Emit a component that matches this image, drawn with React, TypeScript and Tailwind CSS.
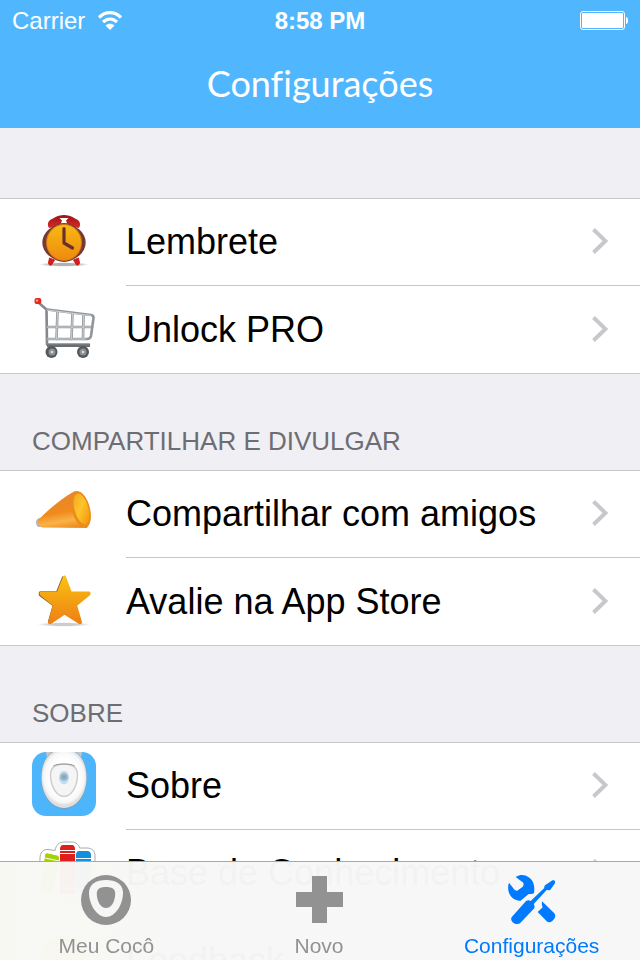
import type { ReactNode } from "react";

function ClockIcon() {
  return (
    <svg viewBox="0 -2 64 64" className="size-16" aria-hidden="true">
      <defs>
        <linearGradient id="clockFace" x1="0" y1="0" x2="0" y2="1">
          <stop offset="0" stopColor="#f8b912" />
          <stop offset="1" stopColor="#ee8a10" />
        </linearGradient>
        <linearGradient id="clockBell" x1="0" y1="0" x2="0" y2="1">
          <stop offset="0" stopColor="#981518" />
          <stop offset="1" stopColor="#dc2a22" />
        </linearGradient>
        <radialGradient id="clockShadow">
          <stop offset="0.5" stopColor="#b0b0b0" />
          <stop offset="1" stopColor="#b0b0b0" stopOpacity="0" />
        </radialGradient>
      </defs>
      <ellipse cx="32" cy="54.500" rx="25" ry="2.200" fill="url(#clockShadow)" />
      <path d="M17.500 48l-1 5 1 2h2l3-5zM46.500 48l1 5-1 2h-2l-3-5z" fill="#cf1f1f" stroke="#cf1f1f" />
      <path d="M17 18c-2.500-4-.5-8 4-9.500C25 5.500 29 5 32 5s7 .5 11 3.500c4.500 1.500 6.500 5.500 4 9.500l-5-1-5-3H27l-5 3z" fill="url(#clockBell)" />
      <path d="M27.500 8h9l-2.500 2.500 1.500 4h-7l1.500-4z" fill="#fff" />
      <ellipse cx="32" cy="32.500" rx="21.700" ry="18.500" fill="#743b35" />
      <ellipse cx="32" cy="32.500" rx="18.500" ry="19.500" fill="#743b35" />
      <ellipse cx="32" cy="32.500" rx="18" ry="18.500" fill="#d97716" />
      <ellipse cx="32" cy="32.500" rx="17" ry="17.500" fill="url(#clockFace)" />
      <path d="M32 18.500V33l8.500 5" fill="none" stroke="#693128" strokeWidth="3.200" strokeLinecap="round" strokeLinejoin="round" />
    </svg>
  );
}

function CartIcon() {
  return (
    <svg viewBox="0 -3 64 64" className="size-16" aria-hidden="true">
      <g fill="none" stroke="#92969a" strokeWidth="2.600" strokeLinejoin="round" strokeLinecap="round">
        <path d="M7 5l7.500 6.500L15 46.500h42" stroke="#84888c" />
        <path d="M15 11.500l44 5.500c2 .3 2.700 1.500 2.500 3L59 38c-.5 2-1.500 3-4 3H15" />
        <path d="M15 29H60" />
        <path d="M25.500 13l-1 28M40.500 15l-1 26M51.500 17L51 41" />
      </g>
      <g fill="none" stroke="#d3d6d9" strokeWidth=".9">
        <path d="M15 12l44 5.500M15 29h44M15.500 41H54M25.500 13l-1 28M40.500 15l-1 26M51.500 17L51 41" />
      </g>
      <path d="M15 46.500h43v2.500H15z" fill="#6b6e72" />
      <g>
        <circle cx="19.500" cy="54" r="6" fill="#53585b" />
        <circle cx="51" cy="54" r="6" fill="#53585b" />
        <circle cx="20" cy="54" r="3.500" fill="#8b9194" />
        <circle cx="51" cy="54" r="3.500" fill="#8b9194" />
        <circle cx="20" cy="54" r="1.300" fill="#d9dcde" />
        <circle cx="51" cy="54" r="1.300" fill="#d9dcde" />
      </g>
      <rect x="2.500" y="0" width="6.800" height="6" rx="2" fill="#e3291d" />
      <circle cx="5" cy="2.500" r="1.200" fill="#ff9d8c" />
    </svg>
  );
}

function MegaphoneIcon() {
  return (
    <svg viewBox="0 -2 64 64" className="size-16" aria-hidden="true">
      <defs>
        <linearGradient id="coneBody" x1="0.400" y1="0.200" x2="0.600" y2="1">
          <stop offset="0" stopColor="#e9872a" />
          <stop offset="0.450" stopColor="#f08a1c" />
          <stop offset="0.750" stopColor="#f9b347" />
          <stop offset="1" stopColor="#ed8d22" />
        </linearGradient>
        <linearGradient id="coneMouth" x1="0" y1="0" x2="0.600" y2="1">
          <stop offset="0" stopColor="#f3a11c" />
          <stop offset="0.550" stopColor="#fdc52c" />
          <stop offset="1" stopColor="#f59b12" />
        </linearGradient>
      </defs>
      <path d="M4 40c0-2 2-4 4-4l3 9H7c-2 0-3-3-3-5z" fill="#a9b5c8" />
      <path d="M6 38C17 27 30 16 42 9.500c5-2 10 2 13 9 4 9 5 21 0 27.500L11 45.500c-3 0-6-4-5-7.500z" fill="url(#coneBody)" />
      <ellipse cx="49" cy="27.500" rx="9" ry="18.500" transform="rotate(-15 49 27.500)" fill="#e98d1b" />
      <ellipse cx="49.500" cy="27" rx="7" ry="15.800" transform="rotate(-15 49.500 27)" fill="url(#coneMouth)" />
    </svg>
  );
}

function StarIcon() {
  return (
    <svg viewBox="0 -3 64 64" className="size-16" aria-hidden="true">
      <defs>
        <linearGradient id="starFill" x1="0" y1="0" x2="0" y2="1">
          <stop offset="0" stopColor="#f9c012" />
          <stop offset="1" stopColor="#ee8114" />
        </linearGradient>
        <radialGradient id="starShadow">
          <stop offset="0.500" stopColor="#ccc" />
          <stop offset="1" stopColor="#ccc" stopOpacity="0" />
        </radialGradient>
      </defs>
      <ellipse cx="32" cy="54.500" rx="27" ry="2.200" fill="url(#starShadow)" />
      <path d="M32 7l-6.500 16H8.500v1.500L22.500 35l-5 17.500" fill="none" stroke="#80541f" strokeWidth="3.500" strokeLinejoin="round" />
      <path d="M32.500 7l6 16H57v1L43.500 35 48.500 52.500h-1L32.500 43 18.500 52.500h-1l5-17.500L9 24v-1h17z" fill="url(#starFill)" stroke="url(#starFill)" strokeWidth="3" strokeLinejoin="round" />
    </svg>
  );
}

function ToiletIcon() {
  return (
    <svg viewBox="0 0 64 64" className="size-16 rounded-[14px]" aria-hidden="true">
      <defs>
        <radialGradient id="seatShade" cx="0.500" cy="0.450">
          <stop offset="0.650" stopColor="#fff" />
          <stop offset="0.900" stopColor="#f7f7f7" />
          <stop offset="1" stopColor="#dedede" />
        </radialGradient>
      </defs>
      <path d="M0 0h64v64H0z" fill="#4db5fc" />
      <path d="M14 0h36l-1 6H15z" fill="#c3c5c7" />
      <path d="M20 0C12 6 9 15 9 26c0 17 10 31 23 31S55 43 55 26C55 15 52 6 44 0z" fill="#6fa3c4" />
      <path d="M21 0C13 5 9.500 14 9.500 25.500 9.500 42 19 56 32 56s22.500-14 22.500-30.500C54.500 14 51 5 43 0z" fill="url(#seatShade)" />
      <path d="M32 12c9 0 13.500 3 13.500 11 0 11-6 21.500-13.500 21.500S18.500 34 18.500 23C18.500 15 23 12 32 12z" fill="#f5f5f5" stroke="#cdcdcd" strokeWidth="1.500" />
      <path d="M21.500 14c4-2.700 17-2.700 21 0" fill="none" stroke="#9b9b9b" strokeWidth="1.200" />
      <ellipse cx="32" cy="25.500" rx="5" ry="6.800" fill="#b7dff8" />
      <circle cx="32" cy="25" r="3.800" fill="#a1b3bf" />
      <circle cx="32" cy="25" r="1.800" fill="#8fa1ad" />
    </svg>
  );
}

function BooksIcon() {
  return (
    <svg viewBox="0 -3 64 64" className="size-16" aria-hidden="true">
      <path d="M7 58L8 16c0-5 3-9 8-8.500l7 1C24 3 27 0 32 0h8c4 0 7 3 7.500 6H55c5 0 8 3 8 8v44z" fill="#fff" stroke="#aaa" strokeWidth="1" />
      <path d="M16 11.500l9 2c2 .5 2 1.500 2 3.500l-7 33-12-2 5-34c0-2 1-3 3-2.500z" fill="#a5d104" />
      <path d="M31 3h9c2 0 3 2 3 4v45H28V7c0-2 1-4 3-4z" fill="#df1f1b" />
      <path d="M47 9h8c3 0 4 2 4 4v37H44V13c0-2 1-4 3-4z" fill="#128fdf" />
      <path d="M28 8.500h15M28 11.500h15M44 16.500h15M13 16l14 3M28 46h15M44 46h15" stroke="#fff" strokeWidth="1" />
    </svg>
  );
}

function FaceIcon() {
  return (
    <svg viewBox="0 0 64 64" className="size-16" aria-hidden="true">
      <circle cx="32" cy="32" r="22" fill="#ffe03a" stroke="#eab308" strokeWidth="1" />
    </svg>
  );
}

type RowProps = { icon: ReactNode; label: string; last?: boolean };

function Row({ icon, label, last = false }: RowProps) {
  return (
    <li>
      <button type="button" className="flex h-[87px] w-full items-stretch pl-8 text-left">
        <span className="w-[94px] shrink-0 pt-[9px]">{icon}</span>
        <span className={last ? "flex min-w-0 flex-1 items-center pr-8" : "flex min-w-0 flex-1 items-center border-b border-[#c8c7cc] pr-8"}>
          <span className="flex-1 truncate text-[36px] leading-[44px]">{label}</span>
          <svg viewBox="0 0 16 28" className="h-7 w-4 shrink-0" fill="none" stroke="#c7c7cc" strokeWidth="4" aria-hidden="true">
            <path d="M1.500 1.500L13.500 13 1.500 24.500" />
          </svg>
        </span>
      </button>
    </li>
  );
}

function Section({ title, children }: { title?: string; children: ReactNode }) {
  return (
    <section>
      {title ? (
        <h2 className="flex h-24 items-end px-8 pb-3.5 text-[26px] leading-[30px] text-[#6d6d72]">{title}</h2>
      ) : (
        <div className="h-[70px]" />
      )}
      <ul className="border-y border-[#c8c7cc] bg-white">{children}</ul>
    </section>
  );
}

function StatusBar() {
  return (
    <div className="grid h-[42px] grid-cols-3 items-center px-3 text-[24px] leading-[30px]">
      <div className="flex items-center gap-3">
        <span>Carrier</span>
        <svg viewBox="0 0 26 20" className="h-5 w-[26px]" fill="none" stroke="#fff" strokeWidth="3.200" aria-label="Wi-Fi">
          <path d="M2 6.500C8.500 0 17.500 0 24 6.500" />
          <path d="M6 11c4.300-4 9.700-4 14 0" />
          <path d="M8.500 14.500c2.500-2.500 6.500-2.500 9 0L13 19z" fill="#fff" stroke="none" />
        </svg>
      </div>
      <span className="text-center font-bold">8:58 PM</span>
      <svg viewBox="0 1 48 20" className="h-5 w-12 justify-self-end" aria-label="Bateria">
        <rect x="0.500" y="1.500" width="44" height="18" rx="2.500" fill="none" stroke="#fff" />
        <rect x="2" y="3" width="41" height="15" rx="1" fill="#fff" />
        <path d="M46 7c1.500 0 2 1.500 2 3.500S47.500 14 46 14z" fill="#fff" />
      </svg>
    </div>
  );
}

function TabBar() {
  return (
    <nav className="fixed inset-x-0 bottom-0 grid h-[99px] grid-cols-3 border-t border-[#a9a9a9] bg-linear-to-r from-[#f8f8f3]/98 to-[#f7f7f7]/98 to-30% pr-0.5 text-[21px] leading-6 text-[#929292]">
      <button type="button" className="flex flex-col items-center gap-2 pt-3">
        <svg viewBox="0 0 50 52" className="h-[52px] w-[50px]" aria-hidden="true">
          <circle cx="25" cy="26" r="25" fill="#929292" />
          <path d="M25 6c10 0 17 4.500 17 12.500C42 31 34 43 25 43S8 31 8 18.500C8 10.500 15 6 25 6z" fill="#f6f6f5" />
          <path d="M25 13c6 0 9.200 2 9.200 6.500C34.200 28 30 34 25 34s-9.200-6-9.200-14.500C15.800 15 19 13 25 13z" fill="#929292" />
        </svg>
        <span>Meu Cocô</span>
      </button>
      <button type="button" className="flex flex-col items-center gap-2 pt-3">
        <svg viewBox="0 0 48 52" className="h-[52px] w-12" aria-hidden="true">
          <path d="M17 2h15v16h16v15H32v16H17V33H1V18h16z" fill="#929292" />
        </svg>
        <span>Novo</span>
      </button>
      <button type="button" aria-current="page" className="flex flex-col items-center gap-2 pt-3 text-[#007aff]">
        <svg viewBox="0 0 48 52" className="h-[52px] w-12" fill="currentColor" aria-hidden="true">
          <path d="M7.700 3C10 1.500 12 1 14 1c6 .3 10 4 11.500 8.500 1 4 1 6 .5 9.800-2 .7-4 .7-5.700 1L13.500 26c-1 1-2 1-3.500.5-5-1-9-5-9.700-10.500C0 13 0 11 1 8.700l5 6.600c1 1 2 1.700 3.300 1.400l5.400-4c1-1 1-3 .6-4z" />
          <path d="M43.700 6.700c1-.7 3-.5 3.300.3.300 1 0 2-.5 3L42 16.300l-3.300-.3-13 14c1 1.500 1 3 .6 4.300L12 49.300c-1.500 1-3.500 1-5 .4-2-.7-3-2-3.700-3.700-.4-1 0-2.500.7-3.300L18 27c1.500-1 3-1.200 4.700 0L36 14.300l.7-2.800z" />
          <path d="M34 27.300l12.300 12c1 1.500 1.200 2.700.7 4-.7 2-2.500 4-4.300 4.700-1.500.4-3 .2-4-.7L29.700 38l5-4.700c-1-2-1-4-.7-6z" />
        </svg>
        <span>Configurações</span>
      </button>
    </nav>
  );
}

export default function App() {
  return (
    <div className="h-screen overflow-hidden bg-[#efeff4] font-['Liberation_Sans',Arial,sans-serif] text-black">
      <header className="h-32 bg-[#50b7ff] text-white">
        <StatusBar />
        <h1 className="flex h-[82px] items-center justify-center font-[Lato,sans-serif] text-[36px] leading-[44px] [font-variant-ligatures:none]">Configurações</h1>
      </header>
      <main>
        <Section>
          <Row icon={<ClockIcon />} label="Lembrete" />
          <Row icon={<CartIcon />} label="Unlock PRO" last />
        </Section>
        <Section title="COMPARTILHAR E DIVULGAR">
          <Row icon={<MegaphoneIcon />} label="Compartilhar com amigos" />
          <Row icon={<StarIcon />} label="Avalie na App Store" last />
        </Section>
        <Section title="SOBRE">
          <Row icon={<ToiletIcon />} label="Sobre" />
          <Row icon={<BooksIcon />} label="Base de Conhecimento" />
          <Row icon={<FaceIcon />} label="Feedback" last />
        </Section>
      </main>
      <TabBar />
    </div>
  );
}
